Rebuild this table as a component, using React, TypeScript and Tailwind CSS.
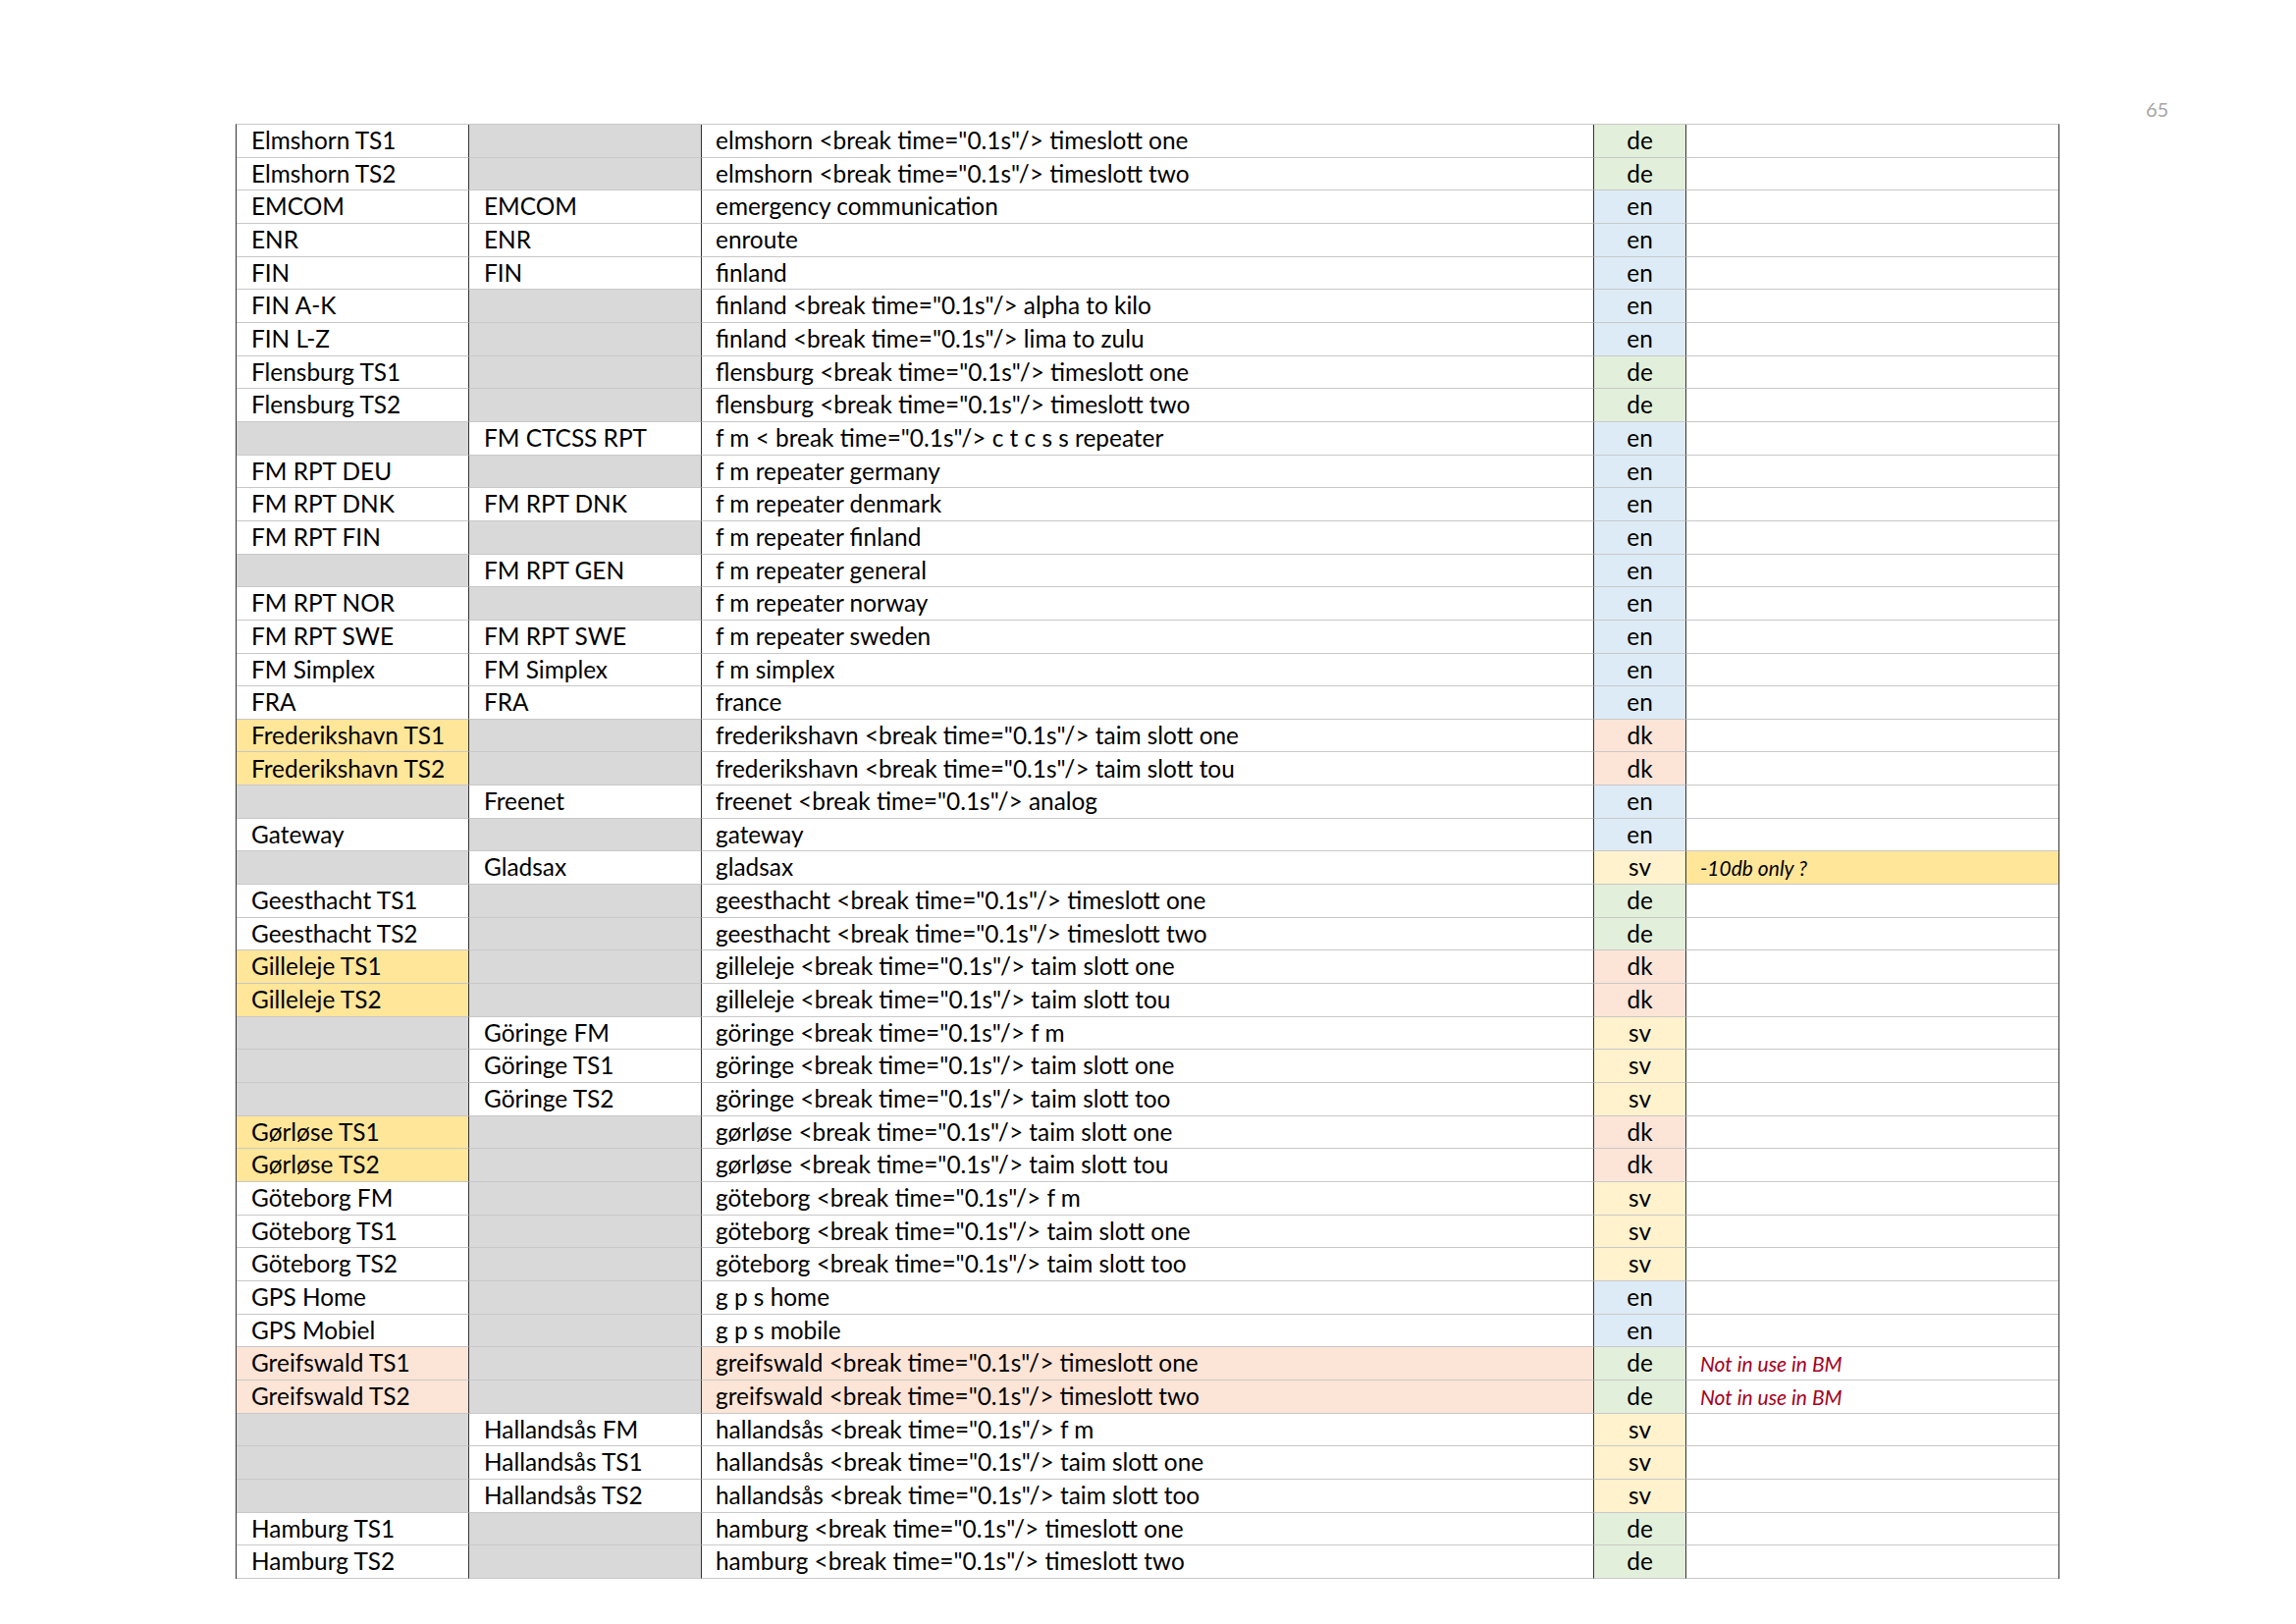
type Row = {
  a: string;
  b: string;
  text: string;
  lang: 'de' | 'en' | 'dk' | 'sv';
  hiA?: 'yellow' | 'peach';
  hiText?: boolean;
  note?: string;
  noteKind?: 'warn' | 'red';
};

const br = '<break time="0.1s"/>';

const rows: Row[] = [
  { a: 'Elmshorn TS1', b: '', text: `elmshorn ${br} timeslott one`, lang: 'de' },
  { a: 'Elmshorn TS2', b: '', text: `elmshorn ${br} timeslott two`, lang: 'de' },
  { a: 'EMCOM', b: 'EMCOM', text: 'emergency communication', lang: 'en' },
  { a: 'ENR', b: 'ENR', text: 'enroute', lang: 'en' },
  { a: 'FIN', b: 'FIN', text: 'finland', lang: 'en' },
  { a: 'FIN A-K', b: '', text: `finland ${br} alpha to kilo`, lang: 'en' },
  { a: 'FIN L-Z', b: '', text: `finland ${br} lima to zulu`, lang: 'en' },
  { a: 'Flensburg TS1', b: '', text: `flensburg ${br} timeslott one`, lang: 'de' },
  { a: 'Flensburg TS2', b: '', text: `flensburg ${br} timeslott two`, lang: 'de' },
  { a: '', b: 'FM CTCSS RPT', text: 'f m < break time="0.1s"/> c t c s s repeater', lang: 'en' },
  { a: 'FM RPT DEU', b: '', text: 'f m repeater germany', lang: 'en' },
  { a: 'FM RPT DNK', b: 'FM RPT DNK', text: 'f m repeater denmark', lang: 'en' },
  { a: 'FM RPT FIN', b: '', text: 'f m repeater finland', lang: 'en' },
  { a: '', b: 'FM RPT GEN', text: 'f m repeater general', lang: 'en' },
  { a: 'FM RPT NOR', b: '', text: 'f m repeater norway', lang: 'en' },
  { a: 'FM RPT SWE', b: 'FM RPT SWE', text: 'f m repeater sweden', lang: 'en' },
  { a: 'FM Simplex', b: 'FM Simplex', text: 'f m simplex', lang: 'en' },
  { a: 'FRA', b: 'FRA', text: 'france', lang: 'en' },
  { a: 'Frederikshavn TS1', b: '', text: `frederikshavn ${br} taim slott one`, lang: 'dk', hiA: 'yellow' },
  { a: 'Frederikshavn TS2', b: '', text: `frederikshavn ${br} taim slott tou`, lang: 'dk', hiA: 'yellow' },
  { a: '', b: 'Freenet', text: `freenet ${br} analog`, lang: 'en' },
  { a: 'Gateway', b: '', text: 'gateway', lang: 'en' },
  { a: '', b: 'Gladsax', text: 'gladsax', lang: 'sv', note: '-10db only ?', noteKind: 'warn' },
  { a: 'Geesthacht TS1', b: '', text: `geesthacht ${br} timeslott one`, lang: 'de' },
  { a: 'Geesthacht TS2', b: '', text: `geesthacht ${br} timeslott two`, lang: 'de' },
  { a: 'Gilleleje TS1', b: '', text: `gilleleje ${br} taim slott one`, lang: 'dk', hiA: 'yellow' },
  { a: 'Gilleleje TS2', b: '', text: `gilleleje ${br} taim slott tou`, lang: 'dk', hiA: 'yellow' },
  { a: '', b: 'Göringe FM', text: `göringe ${br} f m`, lang: 'sv' },
  { a: '', b: 'Göringe TS1', text: `göringe ${br} taim slott one`, lang: 'sv' },
  { a: '', b: 'Göringe TS2', text: `göringe ${br} taim slott too`, lang: 'sv' },
  { a: 'Gørløse TS1', b: '', text: `gørløse ${br} taim slott one`, lang: 'dk', hiA: 'yellow' },
  { a: 'Gørløse TS2', b: '', text: `gørløse ${br} taim slott tou`, lang: 'dk', hiA: 'yellow' },
  { a: 'Göteborg FM', b: '', text: `göteborg ${br} f m`, lang: 'sv' },
  { a: 'Göteborg TS1', b: '', text: `göteborg ${br} taim slott one`, lang: 'sv' },
  { a: 'Göteborg TS2', b: '', text: `göteborg ${br} taim slott too`, lang: 'sv' },
  { a: 'GPS Home', b: '', text: 'g p s home', lang: 'en' },
  { a: 'GPS Mobiel', b: '', text: 'g p s mobile', lang: 'en' },
  { a: 'Greifswald TS1', b: '', text: `greifswald ${br} timeslott one`, lang: 'de', hiA: 'peach', hiText: true, note: 'Not in use in BM', noteKind: 'red' },
  { a: 'Greifswald TS2', b: '', text: `greifswald ${br} timeslott two`, lang: 'de', hiA: 'peach', hiText: true, note: 'Not in use in BM', noteKind: 'red' },
  { a: '', b: 'Hallandsås FM', text: `hallandsås ${br} f m`, lang: 'sv' },
  { a: '', b: 'Hallandsås TS1', text: `hallandsås ${br} taim slott one`, lang: 'sv' },
  { a: '', b: 'Hallandsås TS2', text: `hallandsås ${br} taim slott too`, lang: 'sv' },
  { a: 'Hamburg TS1', b: '', text: `hamburg ${br} timeslott one`, lang: 'de' },
  { a: 'Hamburg TS2', b: '', text: `hamburg ${br} timeslott two`, lang: 'de' },
];

const langBg: Record<Row['lang'], string> = {
  de: 'bg-[#e2efda]',
  en: 'bg-[#ddebf7]',
  dk: 'bg-[#fce4d6]',
  sv: 'bg-[#fff2cc]',
};

const cell = 'h-[33.66px] border-b border-[#c8c8c8] flex items-center overflow-hidden whitespace-nowrap';

export default function App() {
  return (
    <div className="min-h-[1654px] w-[2339px] bg-white font-['Lato',sans-serif] text-[24.4px] text-black relative">
      {/* page number */}
      <div className="absolute left-[2186px] top-[96px] text-[20px] text-[#a6a6a6]">65</div>

      <div className="pt-[126px] pl-[240px]">
        <div className="grid grid-cols-[237px_237px_909px_94px_379px] w-fit border-t border-[#c8c8c8] border-l border-r border-l-[#333] border-r-[#333]">
          {rows.map((r, i) => {
            const aBg = r.hiA === 'yellow' ? 'bg-[#ffe699]' : r.hiA === 'peach' ? 'bg-[#fce4d6]' : r.a ? 'bg-white' : 'bg-[#d9d9d9]';
            const bBg = r.b ? 'bg-white' : 'bg-[#d9d9d9]';
            const tBg = r.hiText ? 'bg-[#fce4d6]' : 'bg-white';
            const noteBg = r.noteKind === 'warn' ? 'bg-[#ffe699]' : 'bg-white';
            return (
              <div key={i} className="contents">
                <div className={`${cell} ${aBg} border-r border-r-[#333] pl-[15px]`}>{r.a}</div>
                <div className={`${cell} ${bBg} border-r border-r-[#333] pl-[15px]`}>{r.b}</div>
                <div className={`${cell} ${tBg} border-r border-r-[#333] pl-[14px]`}>{r.text}</div>
                <div className={`${cell} ${langBg[r.lang]} border-r border-r-[#333] justify-center`}>{r.lang}</div>
                <div className={`${cell} ${noteBg} items-start pl-[14px] pt-[1px]`}>
                  {r.note && (
                    <span
                      className={`italic text-[21px] ${r.noteKind === 'red' ? 'text-[#a50021]' : 'text-black'}`}
                    >
                      {r.note}
                    </span>
                  )}
                </div>
              </div>
            );
          })}
        </div>
      </div>
    </div>
  );
}
